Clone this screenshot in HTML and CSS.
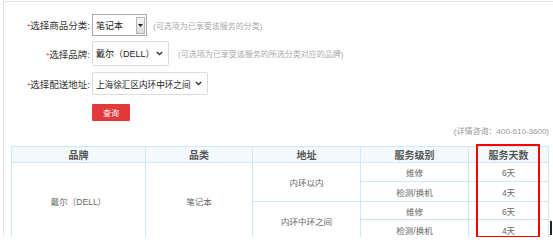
FILE: index.html
```html
<!DOCTYPE html>
<html lang="zh-CN">
<head>
  <meta charset="UTF-8">
  <title>服务天数查询</title>
  <link rel="stylesheet" href="styles.css">
</head>
<body>
  <div class="panel">
    <div class="form-row row-1">
      <label class="label"><i>*</i>选择商品分类:</label>
      <div class="select select-old">
        <span>笔记本</span>
        <span class="drop-btn">
          <svg width="5" height="3" viewBox="0 0 5 3"><path d="M0 0h5L2.5 3z" fill="#222"/></svg>
        </span>
      </div>
      <span class="hint">(可选项为已享受该服务的分类)</span>
    </div>

    <div class="form-row row-2">
      <label class="label"><i>*</i>选择品牌:</label>
      <div class="select select-brand">
        <span>戴尔（DELL）</span>
        <svg class="chev" width="7" height="5" viewBox="0 0 7 5"><path d="M0.8 1l2.7 2.6L6.2 1" fill="none" stroke="#333" stroke-width="1.4"/></svg>
      </div>
      <span class="hint hint-wide">(可选项为已享受该服务的所选分类对应的品牌)</span>
    </div>

    <div class="form-row row-3">
      <label class="label"><i>*</i>选择配送地址:</label>
      <div class="select select-addr">
        <span>上海徐汇区内环中环之间</span>
        <svg class="chev" width="7" height="5" viewBox="0 0 7 5"><path d="M0.8 1l2.7 2.6L6.2 1" fill="none" stroke="#333" stroke-width="1.4"/></svg>
      </div>
    </div>

    <div class="form-row row-btn">
      <button class="btn-query">查询</button>
    </div>

    <p class="contact">(详情咨询：400-610-3600)</p>

    <div class="table-wrap">
      <table class="result">
        <colgroup>
          <col style="width:134px">
          <col style="width:107px">
          <col style="width:108px">
          <col style="width:108px">
          <col style="width:80px">
        </colgroup>
        <thead>
          <tr>
            <th>品牌</th>
            <th>品类</th>
            <th>地址</th>
            <th>服务级别</th>
            <th>服务天数</th>
          </tr>
        </thead>
        <tbody>
          <tr class="r1">
            <td rowspan="4">戴尔（DELL）</td>
            <td rowspan="4">笔记本</td>
            <td rowspan="2">内环以内</td>
            <td>维修</td>
            <td>6天</td>
          </tr>
          <tr class="r2">
            <td>检测/换机</td>
            <td>4天</td>
          </tr>
          <tr class="r3">
            <td rowspan="2">内环中环之间</td>
            <td>维修</td>
            <td>6天</td>
          </tr>
          <tr class="r4">
            <td>检测/换机</td>
            <td>4天</td>
          </tr>
        </tbody>
      </table>
      <div class="mark"></div>
      <div class="caret"></div>
    </div>
  </div>
</body>
</html>
```

FILE: styles.css
```css
body {
  margin: 0;
  padding: 0;
  background: #fff;
  font-family: "Liberation Sans", "Noto Sans CJK SC", sans-serif;
  color: #333;
  overflow: hidden;
}

.panel {
  margin: 1px 0 0 3px;
  border-top: 1px solid #e6e6e6;
  border-left: 1px solid #e6e6e6;
  padding-top: 12px;
  height: 236px;
  box-sizing: border-box;
}

.form-row {
  display: flex;
  align-items: center;
  white-space: nowrap;
}

.row-1 { height: 22px; margin-bottom: 5px; }
.row-2 { height: 25px; margin-bottom: 6px; }
.row-3 { height: 23px; margin-bottom: 9px; }
.row-btn { height: 17px; padding-left: 88px; }

.label {
  width: 86px;
  text-align: right;
  font-size: 9.5px;
  color: #333;
  margin-right: 2px;
}

.label i {
  font-style: normal;
  color: #e4393c;
  font-size: 8px;
}

.select {
  display: flex;
  align-items: center;
  box-sizing: border-box;
  height: 100%;
  font-size: 9px;
  color: #222;
  background: #fff;
}

.select-old {
  width: 55px;
  border: 1px solid #a9a9a9;
  padding-left: 3px;
  justify-content: space-between;
}

.drop-btn {
  display: flex;
  align-items: center;
  justify-content: center;
  width: 9px;
  height: 17px;
  margin-right: 1px;
  background: linear-gradient(#f4f4f4, #dcdcdc);
  border: 1px solid #b5b5b5;
  box-sizing: border-box;
}

.select-brand,
.select-addr {
  border: 1px solid #dcdcdc;
  border-radius: 2px;
  padding: 0 5px 0 3px;
  justify-content: space-between;
}

.select-brand { width: 77px; }
.select-addr { width: 116px; font-size: 8.6px; }

.hint {
  font-size: 8px;
  color: #aaa;
  margin-left: 6px;
}

.hint-wide { margin-left: 9px; }

.btn-query {
  width: 38px;
  height: 17px;
  border: 0;
  padding: 0;
  background: #e4393c;
  color: #fff;
  font-family: inherit;
  font-size: 8px;
  border-radius: 1px;
}

.contact {
  margin: 5px 4px 0 0;
  text-align: right;
  font-size: 8px;
  color: #999;
  line-height: 12px;
}

.table-wrap {
  position: relative;
  margin: 8px 0 0 7px;
}

.result {
  border-collapse: collapse;
  table-layout: fixed;
  width: 537px;
}

.result th,
.result td {
  border: 1px solid #cbe9f8;
  text-align: center;
  padding: 0;
}

.result th {
  height: 15px;
  background: #f3f9fd;
  font-size: 10px;
  font-weight: bold;
  color: #555;
}

.result td {
  font-size: 8.5px;
  color: #666;
}

.r1 td { height: 18px; }
.r2 td { height: 19px; }
.r3 td { height: 17px; }
.r4 td { height: 19px; }

.mark {
  position: absolute;
  left: 465px;
  top: -2px;
  width: 64px;
  height: 94px;
  border: 2px solid #f00;
  box-sizing: border-box;
}

.caret {
  position: absolute;
  left: 539px;
  top: 75px;
  width: 2px;
  height: 14px;
  background: #222;
}
```
